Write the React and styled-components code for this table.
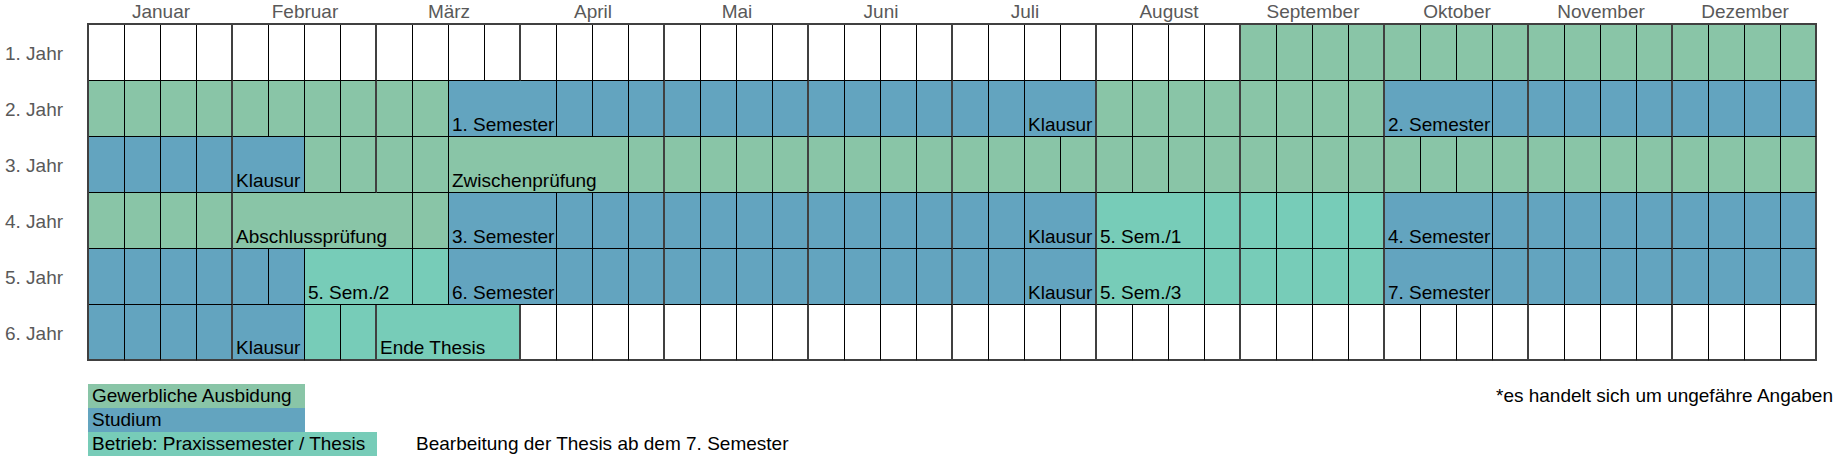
import styled, { createGlobalStyle } from "styled-components";

const colors = {
  white: "#ffffff",
  green: "#89c5a7",
  blue: "#63a4bf",
  teal: "#77ccb8",
  line: "#000000",
  frame: "#404040",
  label: "#595959",
  text: "#000000",
};

const MONTHS = [
  "Januar",
  "Februar",
  "März",
  "April",
  "Mai",
  "Juni",
  "Juli",
  "August",
  "September",
  "Oktober",
  "November",
  "Dezember",
];

// one segment = one (possibly merged) cell of the sheet
const seg = (tone, span = 1, label) => ({ tone, span, label });
const fill = (tone, count) => Array.from({ length: count }, () => seg(tone));

const YEARS = [
  { label: "1. Jahr", cells: [...fill("white", 32), ...fill("green", 16)] },
  {
    label: "2. Jahr",
    cells: [
      ...fill("green", 10),
      seg("blue", 3, "1. Semester"),
      ...fill("blue", 13),
      seg("blue", 2, "Klausur"),
      ...fill("green", 8),
      seg("blue", 3, "2. Semester"),
      ...fill("blue", 9),
    ],
  },
  {
    label: "3. Jahr",
    cells: [
      ...fill("blue", 4),
      seg("blue", 2, "Klausur"),
      ...fill("green", 4),
      seg("green", 5, "Zwischenprüfung"),
      ...fill("green", 33),
    ],
  },
  {
    label: "4. Jahr",
    cells: [
      ...fill("green", 4),
      seg("green", 5, "Abschlussprüfung"),
      ...fill("green", 1),
      seg("blue", 3, "3. Semester"),
      ...fill("blue", 13),
      seg("blue", 2, "Klausur"),
      seg("teal", 3, "5. Sem./1"),
      ...fill("teal", 5),
      seg("blue", 3, "4. Semester"),
      ...fill("blue", 9),
    ],
  },
  {
    label: "5. Jahr",
    cells: [
      ...fill("blue", 6),
      seg("teal", 3, "5. Sem./2"),
      ...fill("teal", 1),
      seg("blue", 3, "6. Semester"),
      ...fill("blue", 13),
      seg("blue", 2, "Klausur"),
      seg("teal", 3, "5. Sem./3"),
      ...fill("teal", 5),
      seg("blue", 3, "7. Semester"),
      ...fill("blue", 9),
    ],
  },
  {
    label: "6. Jahr",
    cells: [
      ...fill("blue", 4),
      seg("blue", 2, "Klausur"),
      ...fill("teal", 2),
      seg("teal", 4, "Ende Thesis"),
      ...fill("white", 36),
    ],
  },
];

export default function App() {
  return (
    <>
      <GlobalStyle />
      <Chart>
        <Months>
          {MONTHS.map((m) => (
            <Month key={m}>{m}</Month>
          ))}
        </Months>

        <Body>
          <YearLabels>
            {YEARS.map((y) => (
              <YearLabel key={y.label}>{y.label}</YearLabel>
            ))}
          </YearLabels>

          <Table>
            {YEARS.map((year, rowIdx) => {
              let col = 0;
              return (
                <TableRow key={year.label}>
                  {year.cells.map((c, i) => {
                    col += c.span;
                    return (
                      <Cell
                        key={i}
                        $span={c.span}
                        $tone={c.tone}
                        $monthEnd={col % 4 === 0}
                        $last={rowIdx === YEARS.length - 1}
                      >
                        {c.label}
                      </Cell>
                    );
                  })}
                </TableRow>
              );
            })}
          </Table>
        </Body>

        <Legend>
          <Swatch $tone="green" $row={1} $width={217}>
            Gewerbliche Ausbidung
          </Swatch>
          <Note $row={1} $col={41}>
            *es handelt sich um ungefähre Angaben
          </Note>
          <Swatch $tone="blue" $row={2} $width={217}>
            Studium
          </Swatch>
          <Swatch $tone="teal" $row={3} $width={289}>
            Betrieb: Praxissemester / Thesis
          </Swatch>
          <Note $row={3} $col={11}>
            Bearbeitung der Thesis ab dem 7. Semester
          </Note>
        </Legend>
      </Chart>
    </>
  );
}

const GlobalStyle = createGlobalStyle`
  * {
    box-sizing: border-box;
  }

  body {
    margin: 0;
    background: #ffffff;
    font-family: "Liberation Sans", Arial, sans-serif;
    font-size: 19px;
    color: ${colors.text};
  }
`;

const Chart = styled.div`
  width: 1840px;
  height: 468px;
  display: flex;
  flex-direction: column;
`;

const Months = styled.div`
  display: grid;
  grid-template-columns: repeat(12, 144px);
  height: 23px;
  margin-left: 89px;
`;

const Month = styled.div`
  text-align: center;
  line-height: 23px;
  color: ${colors.label};
  white-space: nowrap;
`;

const Body = styled.div`
  display: flex;
`;

const YearLabels = styled.div`
  width: 87px;
  padding-top: 2px;
  display: flex;
  flex-direction: column;
`;

const YearLabel = styled.div`
  height: 56px;
  display: flex;
  align-items: center;
  padding: 2px 0 0 5px;
  color: ${colors.label};
  white-space: nowrap;
`;

const Table = styled.div`
  border-top: 2px solid ${colors.frame};
  border-left: 2px solid ${colors.frame};
`;

const TableRow = styled.div`
  display: grid;
  grid-template-columns: repeat(48, 36px);
  height: 56px;
`;

const Cell = styled.div`
  grid-column: span ${(p) => p.$span};
  display: flex;
  align-items: flex-end;
  padding-left: 3px;
  background: ${(p) => colors[p.$tone]};
  border-right: ${(p) =>
    p.$monthEnd ? `2px solid ${colors.frame}` : `1px solid ${colors.line}`};
  border-bottom: ${(p) =>
    p.$last ? `2px solid ${colors.frame}` : `1px solid ${colors.line}`};
  white-space: nowrap;
  min-width: 0;
`;

const Legend = styled.div`
  display: grid;
  grid-template-columns: 88px repeat(48, 36px);
  grid-auto-rows: 24px;
  margin-top: 23px;
`;

const Swatch = styled.div`
  grid-column: 2 / span 9;
  grid-row: ${(p) => p.$row};
  justify-self: start;
  width: ${(p) => p.$width}px;
  padding-left: 4px;
  line-height: 24px;
  background: ${(p) => colors[p.$tone]};
  white-space: nowrap;
`;

const Note = styled.div`
  grid-column: ${(p) => p.$col} / span 8;
  grid-row: ${(p) => p.$row};
  padding-left: 4px;
  line-height: 24px;
  white-space: nowrap;
`;
